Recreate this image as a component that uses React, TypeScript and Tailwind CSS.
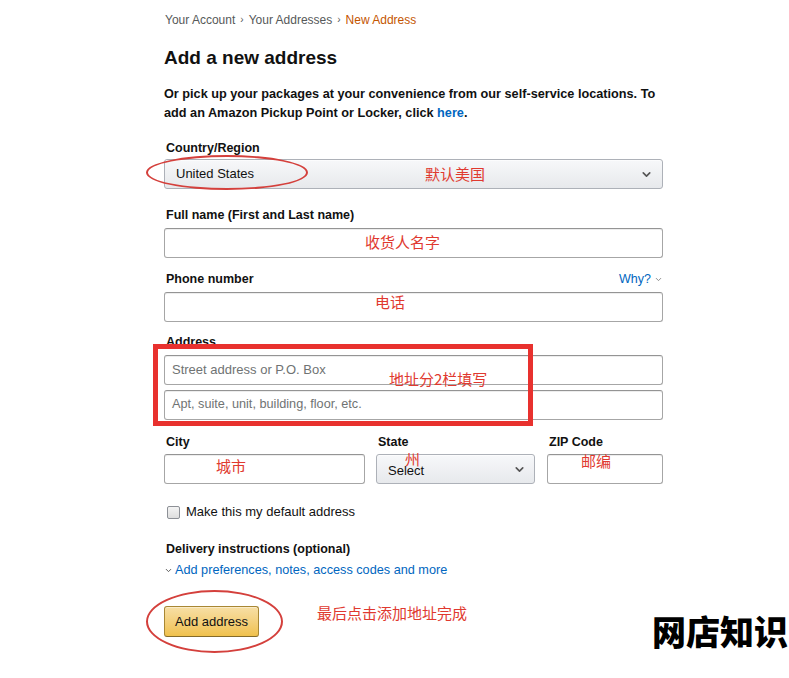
import { ChevronDown } from "lucide-react";

const font = { fontFamily: '"Liberation Sans", Arial, "Noto Sans CJK SC", sans-serif' };

function Note({ text, className }: { text: string; className: string }) {
    return (
        <span
            className={"absolute whitespace-nowrap text-[15px] leading-[18px] text-[#e0392f] " + className}
            style={{ fontFamily: '"Noto Sans CJK SC", sans-serif' }}
        >
            {text}
        </span>
    );
}

function Label({ children, className = "" }: { children: React.ReactNode; className?: string }) {
    return <div className={"pl-[2px] text-[12.5px] font-bold leading-[16px] text-[#111] " + className}>{children}</div>;
}

const inputCls =
    "h-[30px] rounded-[3px] border border-[#a6a6a6] border-t-[#949494] bg-white shadow-[0_1px_0_rgba(0,0,0,0.07)_inset]";

const selectCls =
    "flex h-[30px] items-center rounded-[3px] border border-[#adb1b8] bg-gradient-to-b from-[#f7f8fa] to-[#e7e9ec] shadow-[0_1px_0_rgba(255,255,255,0.6)_inset]";

export default function App() {
    return (
        <div className="relative h-[678px] w-[789px] overflow-hidden bg-white" style={font}>
            <div className="ml-[164px] w-[499px] pt-[12px]">
                {/* breadcrumb */}
                <div className="flex items-center gap-[5px] pl-[1px] text-[12px] leading-[16px] text-[#565959]">
                    <span>Your Account</span>
                    <span className="text-[10px]">›</span>
                    <span>Your Addresses</span>
                    <span className="text-[10px]">›</span>
                    <span className="text-[#c45500]">New Address</span>
                </div>

                <h1 className="mt-[17px] text-[19px] font-bold leading-[26px] text-[#111]">Add a new address</h1>

                <p className="mt-[14px] text-[12.7px] font-bold leading-[19px] text-[#111]">
                    Or pick up your packages at your convenience from our self-service locations. To add an Amazon Pickup
                    Point or Locker, click <span className="text-[#0066c0]">here</span>.
                </p>

                {/* country */}
                <Label className="mt-[17px]">Country/Region</Label>
                <div className={"relative mt-[3px] " + selectCls}>
                    <span className="pl-[11px] text-[13px] text-[#111]">United States</span>
                    <ChevronDown className="absolute right-[9px] h-[13px] w-[13px] text-[#555]" strokeWidth={3} />
                    <Note text="默认美国" className="left-[260px] top-[5px]" />
                </div>

                {/* full name */}
                <Label className="mt-[18px]">Full name (First and Last name)</Label>
                <div className={"relative mt-[5px] " + inputCls}>
                    <Note text="收货人名字" className="left-[200px] top-[4px]" />
                </div>

                {/* phone */}
                <div className="mt-[13px] flex items-center justify-between">
                    <Label>Phone number</Label>
                    <span className="flex items-center gap-[3px] text-[12.5px] leading-[16px] text-[#0066c0]">
                        Why?
                        <ChevronDown className="h-[9px] w-[9px] text-[#888]" strokeWidth={2.5} />
                    </span>
                </div>
                <div className={"relative mt-[5px] " + inputCls}>
                    <Note text="电话" className="left-[210px] top-[0px]" />
                </div>

                {/* address */}
                <Label className="mt-[12px]">Address</Label>
                <div className={"relative mt-[5px] flex items-center " + inputCls}>
                    <span className="pl-[7px] text-[13px] text-[#6f7373]">Street address or P.O. Box</span>
                    <Note text="地址分2栏填写" className="left-[224px] top-[14px]" />
                </div>
                <div className={"mt-[5px] flex items-center " + inputCls}>
                    <span className="pl-[7px] text-[12.7px] text-[#6f7373]">Apt, suite, unit, building, floor, etc.</span>
                </div>

                {/* city / state / zip */}
                <div className="mt-[14px] flex gap-[11px]">
                    <div className="w-[201px]">
                        <Label>City</Label>
                        <div className={"relative mt-[4px] " + inputCls}>
                            <Note text="城市" className="left-[51px] top-[2px]" />
                        </div>
                    </div>
                    <div className="w-[159px]">
                        <Label>State</Label>
                        <div className={"relative mt-[4px] " + selectCls}>
                            <span className="pl-[11px] pt-[4px] text-[13px] text-[#111]">Select</span>
                            <ChevronDown className="absolute right-[8px] h-[13px] w-[13px] text-[#555]" strokeWidth={3} />
                            <Note text="州" className="left-[28px] top-[-5px]" />
                        </div>
                    </div>
                    <div className="ml-[1px] w-[116px]">
                        <Label>ZIP Code</Label>
                        <div className={"relative mt-[4px] " + inputCls}>
                            <Note text="邮编" className="left-[33px] top-[-3px]" />
                        </div>
                    </div>
                </div>

                {/* default checkbox */}
                <div className="mt-[19px] flex items-center gap-[6px] pl-[3px] text-[13px] leading-[18px] text-[#111]">
                    <span className="h-[13px] w-[13px] rounded-[2px] border border-[#8d9096] bg-gradient-to-b from-[#f4f4f4] to-[#dedede]" />
                    <span>Make this my default address</span>
                </div>

                <Label className="mt-[20px]">Delivery instructions (optional)</Label>
                <div className="mt-[5px] flex items-center gap-[2px] text-[12.7px] leading-[16px] text-[#0066c0]">
                    <ChevronDown className="h-[9px] w-[9px] text-[#555]" strokeWidth={2.5} />
                    Add preferences, notes, access codes and more
                </div>

                <div className="relative mt-[28px] flex items-center">
                    <button className="h-[31px] w-[95px] rounded-[3px] border border-[#a88734] border-b-[#846a29] bg-gradient-to-b from-[#f7dfa5] to-[#f0c14b] text-[13px] text-[#111] shadow-[0_1px_0_rgba(255,255,255,0.4)_inset]">
                        Add address
                    </button>
                    <Note text="最后点击添加地址完成" className="left-[153px] top-[-2px]" />
                </div>
            </div>

            {/* annotation marks */}
            <div className="absolute left-[146px] top-[155px] h-[35px] w-[162px] rounded-[50%] border-[2.5px] border-[#d4403c]" />
            <div className="absolute left-[153px] top-[344px] h-[82px] w-[380px] border-[5px] border-[#e8312e]" />
            <div className="absolute left-[146px] top-[590px] h-[63px] w-[137px] rounded-[50%] border-[2.5px] border-[#d4403c]" />

            <div
                className="absolute left-[652px] top-[609px] whitespace-nowrap text-[34px] font-black leading-[44px] text-black"
                style={{ fontFamily: '"Noto Sans CJK SC", sans-serif' }}
            >
                网店知识
            </div>
        </div>
    );
}
